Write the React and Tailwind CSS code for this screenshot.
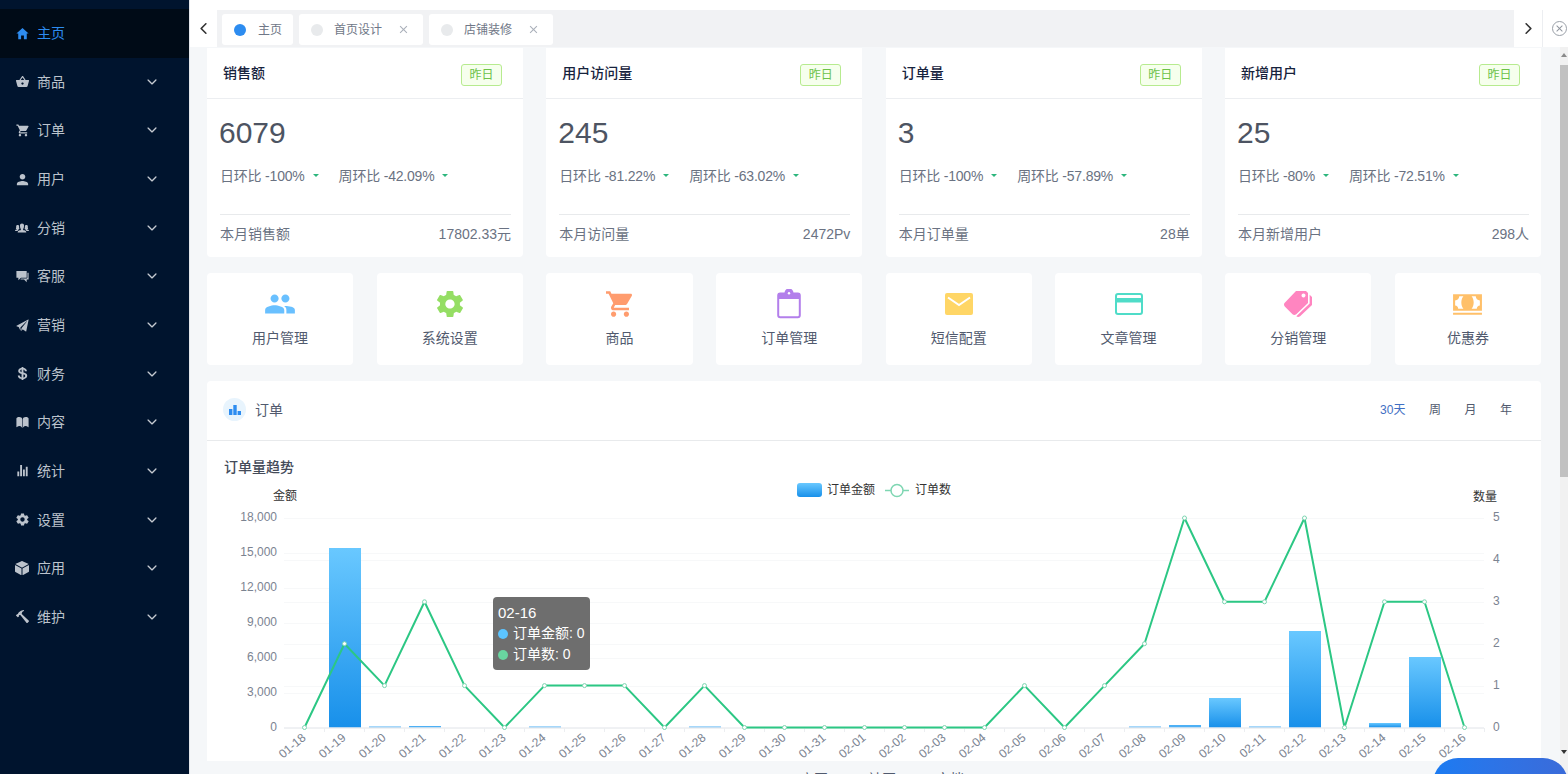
import React from "react";
import {
  IoMdHome, IoMdBasket, IoMdCart, IoMdPerson, IoIosPeople, IoMdChatboxes, IoIosPaperPlane, IoLogoUsd,
  IoIosBook, IoIosStats, IoMdSettings, IoMdCube, IoMdHammer, IoIosArrowDown, IoIosArrowBack, IoIosArrowForward,
  IoMdPeople, IoMdPricetags, IoMdCash, IoMdClose,
} from "react-icons/io";

const menu = [
  [IoMdHome, "主页", 15], [IoMdBasket, "商品", 15], [IoMdCart, "订单", 15], [IoMdPerson, "用户", 15], [IoIosPeople, "分销", 16],
  [IoMdChatboxes, "客服", 15], [IoIosPaperPlane, "营销", 15], [IoLogoUsd, "财务", 15], [IoIosBook, "内容", 15], [IoIosStats, "统计", 15],
  [IoMdSettings, "设置", 15], [IoMdCube, "应用", 16], [IoMdHammer, "维护", 15],
];

const stats = [
  { t: "销售额", v: "6079", d: "-100%", w: "-42.09%", f: "本月销售额", r: "17802.33元" },
  { t: "用户访问量", v: "245", d: "-81.22%", w: "-63.02%", f: "本月访问量", r: "2472Pv" },
  { t: "订单量", v: "3", d: "-100%", w: "-57.89%", f: "本月订单量", r: "28单" },
  { t: "新增用户", v: "25", d: "-80%", w: "-72.51%", f: "本月新增用户", r: "298人" },
];

const ClipboardIcon = () => (
  <svg width="30" height="30" viewBox="0 0 30 30" fill="none">
    <rect x="4.2" y="4.6" width="21.6" height="23.6" rx="2" stroke="#b37feb" strokeWidth="2" />
    <path d="M4 4h6.5a4.5 4.5 0 0 1 9 0H26v6H4z" fill="#b37feb" />
    <circle cx="15" cy="4.2" r="1.2" fill="#fff" />
  </svg>
);
const MailIcon = () => (
  <svg width="30" height="30" viewBox="0 0 30 30">
    <rect x="1" y="4" width="28" height="22" rx="2" fill="#ffd666" />
    <path d="M4 8.5 15 16 26 8.5" fill="none" stroke="#fff" strokeWidth="2" />
  </svg>
);
const CardIcon = () => (
  <svg width="30" height="30" viewBox="0 0 30 30" fill="none">
    <rect x="2" y="5" width="26" height="20" rx="2" stroke="#4fdcc8" strokeWidth="2" />
    <rect x="2" y="9" width="26" height="4.5" fill="#4fdcc8" />
  </svg>
);

const shortcuts = [
  [<IoMdPeople size={34} color="#69c0ff" />, "用户管理"],
  [<IoMdSettings size={32} color="#95de64" />, "系统设置"],
  [<IoMdCart size={32} color="#ff9c6e" />, "商品"],
  [<ClipboardIcon />, "订单管理"],
  [<MailIcon />, "短信配置"],
  [<CardIcon />, "文章管理"],
  [<IoMdPricetags size={32} color="#ff85c0" />, "分销管理"],
  [<IoMdCash size={33} color="#ffc069" />, "优惠券"],
];

const dates = [
  "01-18","01-19","01-20","01-21","01-22","01-23","01-24","01-25","01-26","01-27","01-28","01-29","01-30","01-31",
  "02-01","02-02","02-03","02-04","02-05","02-06","02-07","02-08","02-09","02-10","02-11","02-12","02-13","02-14","02-15","02-16",
];
const counts = [0,2,1,3,1,0,1,1,1,0,1,0,0,0,0,0,0,0,1,0,1,2,5,3,3,5,0,3,3,0];
const barHeights = [0,179.5,1,1.5,0,0,1,0,0,0,1,0,0,0,0,0,0,0,0,0,0,1,2.5,29.5,1,96.5,0,4.5,70.5,0];
const X = (i) => 304.5 + i * 40;
const Y0 = 727.5;
const YC = (c) => Y0 - c * 41.9;

function Chart() {
  return (
    <svg viewBox="207 478 1334 283" className="block w-[1334px] h-[283px]">
      <defs>
        <linearGradient id="bar" x1="0" y1="0" x2="0" y2="1">
          <stop offset="0" stopColor="#69c8ff" />
          <stop offset="1" stopColor="#1890ea" />
        </linearGradient>
      </defs>
      <rect x="797" y="483" width="25" height="14" rx="3" fill="url(#bar)" />
      <text x="827" y="494" fontSize="12" fill="#333">订单金额</text>
      <path d="M885 490.5h24" stroke="#7ed6b2" strokeWidth="1.5" />
      <circle cx="897" cy="490.5" r="6" fill="#fff" stroke="#7ed6b2" strokeWidth="1.5" />
      <text x="915" y="494" fontSize="12" fill="#333">订单数</text>
      <text x="273" y="500" fontSize="12" fill="#333">金额</text>
      <text x="1473" y="501" fontSize="12" fill="#333">数量</text>
      {[518,553,588,623,658,693].map((y) => <path key={y} d={`M284 ${y + 0.5}H1484`} stroke="#f7f8f9" />)}
      {[560,602,644,686].map((y) => <path key={y} d={`M284 ${y + 0.5}H1484`} stroke="#f7f8f9" />)}
      {["18,000","15,000","12,000","9,000","6,000","3,000","0"].map((l, i) => (
        <text key={l} x="277" y={521.4 + i * 34.9} fontSize="12" textAnchor="end" fill="#7b8391">{l}</text>
      ))}
      {["5","4","3","2","1","0"].map((l, i) => (
        <text key={l} x="1493" y={521.4 + i * 41.9} fontSize="12" fill="#7b8391">{l}</text>
      ))}
      {barHeights.map((h, i) => h > 0 && <rect key={i} x={X(i) - 15.5} y={Y0 - h} width="32" height={h} fill={h < 3 ? "#4db0f5" : "url(#bar)"} />)}
      <path d={`M284 ${Y0 + 0.5}H1484`} stroke="#e0e3e8" />
      {dates.map((d, i) => (
        <g key={d}>
          <path d={`M${X(i) + 20} 728v4`} stroke="#eceef1" />
          <text x={X(i) + 2} y="739" fontSize="12" textAnchor="end" fill="#7b8391" transform={`rotate(-40 ${X(i) + 2} 739)`}>{d}</text>
        </g>
      ))}
      <polyline points={counts.map((c, i) => `${X(i)},${YC(c)}`).join(" ")} fill="none" stroke="#2cc784" strokeWidth="2" strokeLinejoin="round" />
      {counts.map((c, i) => <circle key={i} cx={X(i)} cy={YC(c)} r="2" fill="#fff" stroke="#7ed6b2" />)}
    </svg>
  );
}

const Arrow = () => <span className="inline-block ml-[8px] w-0 h-0 border-x-[3.5px] border-x-transparent border-t-[3.5px] border-t-[#2cb67d]" />;

function StatCard({ s }) {
  return (
    <div className="bg-white rounded-b h-[209px] flex flex-col">
      <div className="h-[51px] pt-[3px] pl-4 pr-[21px] flex items-center justify-between border-b border-[#eceef1]">
        <span className="text-sm font-medium text-[#17233d] -mt-1">{s.t}</span>
        <span className="w-[41px] h-[22px] flex items-center justify-center rounded-[3px] border border-[#b7eb8f] bg-[#f6ffed] text-[#6cc24a] text-xs">昨日</span>
      </div>
      <div className="pl-[13px] pr-3 flex-1 flex flex-col">
        <div className="text-[30px] leading-[34px] text-[#4d5462] mt-[17px] -ml-px">{s.v}</div>
        <div className="flex items-center text-sm tracking-[-0.2px] text-[#6a7282] mt-[16px] h-[19px]">
          <span>日环比 {s.d}</span><Arrow />
          <span className="ml-[20px]">周环比 {s.w}</span><Arrow />
        </div>
        <div className="mt-[29px] border-t border-[#e8eaec] pt-[9px] flex justify-between text-sm text-[#6a7282]">
          <span>{s.f}</span><span>{s.r}</span>
        </div>
      </div>
    </div>
  );
}

function Tab({ dot, label, close }) {
  return (
    <div className="h-[31px] bg-white flex items-center pl-3 pr-[11px] mr-[6px] rounded-[3px] text-xs">
      <span className={`w-3 h-3 rounded-full ${dot}`} />
      <span className={`${close ? "ml-[11px]" : "ml-3"} text-[#6f7787]`}>{label}</span>
      {close && <IoMdClose size={13} className="ml-[15px] mr-[2px] text-[#aab0ba]" />}
    </div>
  );
}

export default function App() {
  return (
    <div className="relative flex w-[1568px] h-[774px] overflow-hidden bg-white font-['Liberation_Sans','Noto_Sans_CJK_SC',sans-serif]">
      <aside className="w-[189px] shrink-0 bg-[#00142e] pt-[8.9px]">
        {menu.map(([Icon, label, size], i) => (
          <div key={label} className={`h-[48.65px] flex items-center pl-[15px] pr-[30px] text-sm ${i === 0 ? "bg-[#000b17] text-[#2d8cf0]" : "text-[#bcc3cc]"}`}>
            <span className="w-[14px] flex justify-center shrink-0"><Icon size={size} className="shrink-0" /></span>
            <span className="ml-2 flex-1">{label}</span>
            {i > 0 && <IoIosArrowDown size={14} className="text-[#c5cad1]" />}
          </div>
        ))}
      </aside>
      <div className="w-px bg-[#e4e6ea]" />
      <main className="flex-1 min-w-0 flex flex-col">
        <div className="h-[10px] bg-white shrink-0" />
        <div className="h-[37px] shrink-0 bg-[#f1f2f4] flex items-center">
          <div className="w-[27px] h-full bg-white flex items-center justify-center text-[#333]"><IoIosArrowBack size={17} /></div>
          <div className="flex-1 flex items-center pl-[5px] pt-[2px]">
            <Tab dot="bg-[#2d8cf0]" label="主页" />
            <Tab dot="bg-[#e8eaec]" label="首页设计" close />
            <Tab dot="bg-[#e8eaec]" label="店铺装修" close />
          </div>
          <div className="w-[28px] h-full bg-white flex items-center justify-center text-[#333]"><IoIosArrowForward size={17} /></div>
          <div className="w-[26px] h-full bg-white border-l border-[#eceef1] flex items-center pl-[9px]">
            <span className="w-[15px] h-[15px] shrink-0 rounded-full border border-[#9aa0a8] flex items-center justify-center text-[#8d939c]"><IoMdClose size={11} /></span>
          </div>
        </div>
        <div className="flex-1 min-h-0 flex bg-[#f5f7f9]">
          <div className="w-[1370px] shrink-0 pl-[17px] pr-[19px] pt-px overflow-hidden">
            <div className="grid grid-cols-4 gap-x-[23.3px]">
              {stats.map((s) => <StatCard key={s.t} s={s} />)}
            </div>
            <div className="grid grid-cols-8 gap-x-[23.6px] mt-4">
              {shortcuts.map(([icon, label]) => (
                <div key={label} className="h-[92px] bg-white rounded flex flex-col items-center pt-4">
                  <div className="h-[30px] flex items-center justify-center">{icon}</div>
                  <span className="mt-[9px] text-sm text-[#515a6e]">{label}</span>
                </div>
              ))}
            </div>
            <div className="relative mt-4 h-[380px] bg-white rounded-t">
              <div className="h-[60px] border-b border-[#e8eaec] pl-4 pr-[29px] pb-[2px] flex items-center justify-between">
                <div className="flex items-center">
                  <span className="w-[23px] h-[23px] rounded-full bg-[#e8f4fd] flex items-center justify-center">
                    <svg width="12" height="10" viewBox="0 0 12 10" fill="#2d8cf0"><rect x="0" y="4" width="3.4" height="6" /><rect x="4.3" y="0" width="3.4" height="10" /><rect x="8.6" y="6" width="3.4" height="4" /></svg>
                  </span>
                  <span className="ml-[9px] text-sm text-[#515a6e]">订单</span>
                </div>
                <div className="flex items-center gap-[23.5px] text-xs text-[#515a6e]">
                  <span className="text-[#3f6fc4]">30天</span><span>周</span><span>月</span><span>年</span>
                </div>
              </div>
              <div className="pl-[17px] pt-[18px] h-[37px] text-sm leading-[16px] font-medium text-[#444b59]">订单量趋势</div>
              <Chart />
              <div className="absolute left-[286px] top-[216px] w-[97px] h-[73px] rounded bg-[#6e6e6e] text-white text-sm leading-[21px] px-[5px] pt-[5px]">
                <div className="text-[15px]">02-16</div>
                <div className="flex items-center whitespace-nowrap"><span className="w-[10px] h-[10px] rounded-full bg-[#5cc4ff] mr-[5px]" />订单金额: 0</div>
                <div className="flex items-center whitespace-nowrap"><span className="w-[10px] h-[10px] rounded-full bg-[#69d5a0] mr-[5px]" />订单数: 0</div>
              </div>
            </div>
            <div className="flex justify-center gap-10 mt-2 ml-[16px] text-sm text-[#515a6e]">
              <span>官网</span><span>社区</span><span>文档</span>
            </div>
          </div>
          <div className="w-2 shrink-0 bg-[#f1f1f1] flex flex-col items-center">
            <span className="mt-[6px] w-0 h-0 border-x-[3px] border-x-transparent border-b-[4px] border-b-[#8a8a8a]" />
            <span className="mt-2 w-2 h-[412px] bg-[#c1c1c1]" />
            <span className="mt-auto mb-5 w-0 h-0 border-x-[3px] border-x-transparent border-t-[4px] border-t-[#333]" />
          </div>
        </div>
      </main>
      <div className="absolute left-[1433px] top-[758px] w-[135px] h-[50px] rounded-[25px] bg-gradient-to-r from-[#1a7bf2] to-[#3a6bd9]" />
    </div>
  );
}
